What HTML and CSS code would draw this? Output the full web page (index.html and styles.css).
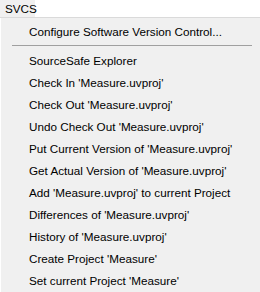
FILE: index.html
```html
<!DOCTYPE html>
<html lang="en">
<head>
    <meta charset="UTF-8">
    <title>SVCS Menu</title>
    <link rel="stylesheet" href="styles.css">
</head>
<body>
    <div class="menuBar">
        <span class="menuTitle">SVCS</span>
    </div>
    <div class="menu">
        <div class="menuItem">Configure Software Version Control...</div>
        <div class="separator"></div>
        <div class="menuItem">SourceSafe Explorer</div>
        <div class="menuItem">Check In 'Measure.uvproj'</div>
        <div class="menuItem">Check Out 'Measure.uvproj'</div>
        <div class="menuItem">Undo Check Out 'Measure.uvproj'</div>
        <div class="menuItem">Put Current Version of 'Measure.uvproj'</div>
        <div class="menuItem">Get Actual Version of 'Measure.uvproj'</div>
        <div class="menuItem">Add 'Measure.uvproj' to current Project</div>
        <div class="menuItem">Differences of 'Measure.uvproj'</div>
        <div class="menuItem">History of 'Measure.uvproj'</div>
        <div class="menuItem">Create Project 'Measure'</div>
        <div class="menuItem">Set current Project 'Measure'</div>
    </div>
</body>
</html>
```

FILE: styles.css
```css
body {
    margin: 0;
    width: 260px;
    height: 292px;
    overflow: hidden;
    display: flex;
    flex-direction: column;
    background: #ffffff;
    font-family: 'Liberation Sans', sans-serif;
    font-size: 11.7px;
    color: #000000;
}
.menuBar {
    height: 17px;
    flex-shrink: 0;
    background: #ffffff;
    border-bottom: 1px solid #dadada;
    display: flex;
}
.menuTitle {
    background: #f0f0f0;
    padding: 0 5px;
    line-height: 17px;
    width: 25px;
}
.menu {
    flex: 1;
    margin-left: 1px;
    background: #f0f0f0;
    padding-top: 2px;
    overflow: hidden;
}
.menuItem {
    height: 22px;
    line-height: 23px;
    padding-left: 28px;
    white-space: nowrap;
}
.separator {
    height: 1px;
    background: #a0a0a0;
    margin: 3px 8px 3px 11px;
}
```
